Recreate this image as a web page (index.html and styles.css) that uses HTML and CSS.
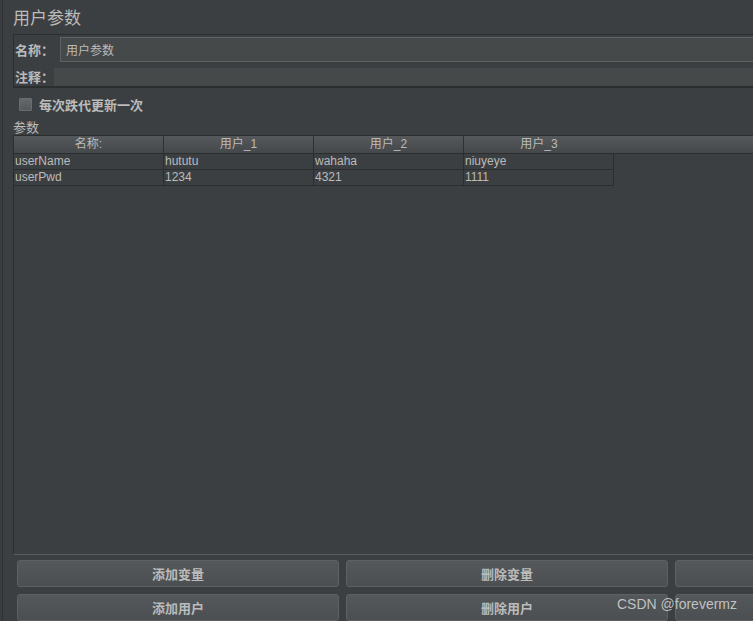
FILE: index.html
```html
<!DOCTYPE html>
<html lang="zh-CN">
<head>
<meta charset="utf-8">
<title>用户参数</title>
<link rel="stylesheet" href="styles.css">
</head>
<body>
<div class="app">
  <div class="edge"></div>
  <div class="main">
    <h1 class="title">用户参数</h1>
    <div class="namepanel">
      <div class="row row-name">
        <span class="lbl lbl-name">名称：</span>
        <div class="field field-name">用户参数</div>
      </div>
      <div class="row row-comment">
        <span class="lbl lbl-comment">注释：</span>
        <div class="field field-comment"></div>
      </div>
    </div>
    <div class="check-row">
      <span class="checkbox"></span>
      <span class="check-text">每次跌代更新一次</span>
    </div>
    <div class="section">参数</div>
    <div class="tablepane">
      <div class="thead">
        <div class="th">名称:</div>
        <div class="th">用户_1</div>
        <div class="th">用户_2</div>
        <div class="th th-last">用户_3</div>
        <div class="th-fill"></div>
      </div>
      <div class="tr">
        <div class="td">userName</div>
        <div class="td">hututu</div>
        <div class="td">wahaha</div>
        <div class="td">niuyeye</div>
      </div>
      <div class="tr">
        <div class="td">userPwd</div>
        <div class="td">1234</div>
        <div class="td">4321</div>
        <div class="td">1111</div>
      </div>
    </div>
    <div class="buttons">
      <button class="btn">添加变量</button>
      <button class="btn">删除变量</button>
      <button class="btn"></button>
      <button class="btn">添加用户</button>
      <button class="btn">删除用户</button>
      <button class="btn"></button>
    </div>
  </div>
</div>
<div class="watermark">CSDN @forevermz</div>
</body>
</html>
```
FILE: styles.css
```css
html, body {
  margin: 0;
  padding: 0;
  width: 753px;
  height: 621px;
  overflow: hidden;
  background: #3c3f41;
}
body {
  position: relative;
  color: #bbbbbb;
  font-family: "Liberation Sans", "Noto Sans CJK SC", sans-serif;
}
.app {
  display: flex;
  height: 621px;
}
.edge {
  flex: 0 0 2px;
  background: #3a3d3f;
  border-right: 1px solid #2e3032;
}
.main {
  flex: 0 0 1000px;
  padding-left: 10px;
  display: flex;
  flex-direction: column;
}
.title {
  margin: 0;
  height: 34px;
  line-height: 34px;
  font-size: 17px;
  font-weight: normal;
  font-family: "Noto Sans CJK SC", sans-serif;
  color: #bbbbbb;
}
.namepanel {
  border-top: 1px solid #2b2d2f;
  border-left: 1px solid #2b2d2f;
  border-bottom: 2px solid #2b2d2f;
  padding: 2px 0 0 1px;
  display: flex;
  flex-direction: column;
  gap: 5px;
}
.row {
  display: flex;
  align-items: center;
}
.lbl {
  font-family: "Noto Sans CJK SC", sans-serif;
  font-weight: bold;
  font-size: 13px;
  color: #bbbbbb;
  white-space: nowrap;
}
.lbl-name { width: 45px; }
.lbl-comment { width: 39px; }
.field {
  flex: 1;
  background: #45494a;
  box-sizing: border-box;
}
.row-name .field {
  height: 25px;
  border: 1px solid #5e6163;
  padding-left: 5px;
  line-height: 23px;
  font-family: "Noto Sans CJK SC", sans-serif;
  font-size: 12px;
  color: #bbbbbb;
}
.row-comment .field {
  height: 18px;
}
.check-row {
  margin-top: 4px;
  height: 26px;
  display: flex;
  align-items: center;
  padding-left: 6px;
  gap: 7px;
}
.checkbox {
  width: 11px;
  height: 11px;
  border: 1px solid #6a6d6f;
  border-radius: 1px;
  background: linear-gradient(#65686a, #56595b);
}
.check-text {
  font-family: "Noto Sans CJK SC", sans-serif;
  font-weight: bold;
  font-size: 13px;
}
.section {
  height: 17px;
  line-height: 17px;
  font-family: "Noto Sans CJK SC", sans-serif;
  font-weight: normal;
  font-size: 13px;
}
.tablepane {
  height: 421px;
  box-sizing: border-box;
  border-top: 1px solid #2b2d2f;
  border-left: 1px solid #2b2d2f;
  border-bottom: 1px solid #5b5e60;
  background: #3c3f41;
}
.thead {
  display: flex;
  height: 18px;
  box-sizing: border-box;
  border-bottom: 1px solid #2b2d2f;
  background: linear-gradient(#55595c, #45484b);
}
.th {
  flex: 0 0 150px;
  box-sizing: border-box;
  border-right: 1px solid #2e3032;
  text-align: center;
  font-family: "Liberation Sans", "Noto Sans CJK SC", sans-serif;
  font-size: 12px;
  line-height: 17px;
  color: #bbbbbb;
}
.th-last {
  border-right: none;
}
.th-fill { flex: 1; }
.tr {
  display: flex;
  width: 600px;
  height: 16px;
  box-sizing: border-box;
  border-bottom: 1px solid #2b2d2f;
}
.td {
  flex: 0 0 150px;
  box-sizing: border-box;
  border-right: 1px solid #2b2d2f;
  padding-left: 1px;
  font-size: 12px;
  line-height: 15px;
  color: #bbbbbb;
  white-space: nowrap;
}
.buttons {
  margin-top: 5px;
  margin-left: 4px;
  display: grid;
  grid-template-columns: 322px 322px 322px;
  column-gap: 7px;
  row-gap: 7px;
}
.btn {
  height: 27px;
  box-sizing: border-box;
  border: 1px solid #5d6163;
  border-radius: 3px;
  background: linear-gradient(#54585a, #4b4f51);
  color: #bbbbbb;
  font-family: "Noto Sans CJK SC", sans-serif;
  font-weight: bold;
  font-size: 13px;
  padding: 0;
}
.watermark {
  position: absolute;
  left: 617px;
  top: 596px;
  font-family: "Liberation Sans", sans-serif;
  font-size: 14px;
  color: rgba(215, 215, 215, 0.85);
  white-space: nowrap;
}
```
